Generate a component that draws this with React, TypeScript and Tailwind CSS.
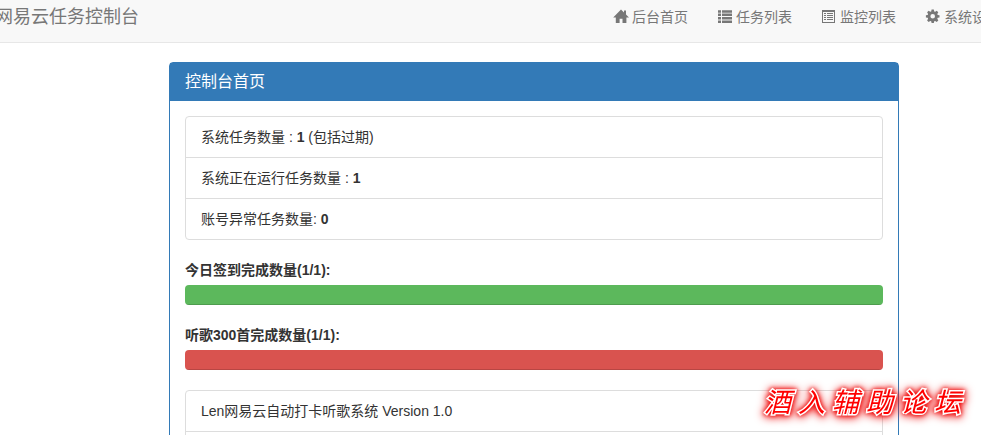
import type { ReactNode } from "react";

function HomeIcon() {
  return (
    <svg viewBox="0 0 14 14" className="size-3.5 shrink-0 overflow-visible" fill="currentColor" aria-hidden="true">
      <path d="M7 -0.6 L10 2.4 V0.6 H12 V4.4 L15 7.4 H12.4 V13 H8.5 V8.8 H5.6 V13 H1.8 V7.4 H-0.8 Z" />
    </svg>
  );
}

function ListIcon() {
  return (
    <svg viewBox="0 0 14 14" className="size-3.5 shrink-0" fill="currentColor" aria-hidden="true">
      <path d="M0 0.2h3v2.5H0zM4 0.2h10.5v2.5H4zM0 3.6h3v2.5H0zM4 3.6h10.5v2.5H4zM0 7h3v2.5H0zM4 7h10.5v2.5H4zM0 10.4h3v2.5H0zM4 10.4h10.5v2.5H4z" />
    </svg>
  );
}

function ListAltIcon() {
  return (
    <svg viewBox="0 0 14 14" className="size-3.5 shrink-0" fill="currentColor" shapeRendering="crispEdges" aria-hidden="true">
      <path fillRule="evenodd" d="M0 0h13v13H0zM1 2v10h11V2z" />
      <path d="M2 3h2v1H2zM5 3h6v1H5zM2 5h2v1H2zM5 5h6v1H5zM2 7h2v1H2zM5 7h6v1H5zM2 9h2v1H2zM5 9h6v1H5z" />
    </svg>
  );
}

function CogIcon() {
  return (
    <svg viewBox="0 0 14 14" className="size-3.5 shrink-0 overflow-visible" fill="currentColor" aria-hidden="true">
      <path
        fillRule="evenodd"
        d="M5.6 -0.4h2.2l0.4 1.8 1 0.4 1.5-1 1.6 1.5-1 1.6 0.4 1 1.8 0.4v2.1l-1.8 0.4-0.4 1 1 1.6-1.6 1.5-1.5-1-1 0.4-0.4 1.8H5.6l-0.4-1.8-1-0.4-1.5 1-1.6-1.5 1-1.6-0.4-1-1.8-0.4V5.3l1.8-0.4 0.4-1-1-1.6L2.7 0.8l1.5 1 1-0.4zM6.7 4a2.3 2.3 0 1 0 0 4.6a2.3 2.3 0 1 0 0-4.6z"
      />
    </svg>
  );
}

const links = [
  { label: "后台首页", icon: <HomeIcon /> },
  { label: "任务列表", icon: <ListIcon /> },
  { label: "监控列表", icon: <ListAltIcon /> },
  { label: "系统设置", icon: <CogIcon /> },
];

const stats = [
  { label: "系统任务数量 :", value: 1, note: "(包括过期)" },
  { label: "系统正在运行任务数量 :", value: 1 },
  { label: "账号异常任务数量:", value: 0 },
];

function ListGroup({ children }: { children: ReactNode }) {
  return (
    <ul className="mb-5 divide-y divide-[#ddd] rounded border border-[#ddd] bg-white">
      {children}
    </ul>
  );
}

function Progress({ id, label, done, total, bar }: { id: string; label: string; done: number; total: number; bar: string }) {
  return (
    <div className="mb-5">
      <p id={id} className="mb-[5px] font-bold">
        {label}({done}/{total}):
      </p>
      <div
        role="progressbar"
        aria-labelledby={id}
        aria-valuenow={done}
        aria-valuemin={0}
        aria-valuemax={total}
        className="h-5 overflow-hidden rounded bg-[#f5f5f5]"
      >
        <div
          className={`h-full shadow-[inset_0_-1px_0_rgba(0,0,0,0.15)] ${bar}`}
          style={{ width: `${(done / total) * 100}%` }}
        />
      </div>
    </div>
  );
}

export default function App() {
  return (
    <div className="relative h-screen overflow-hidden bg-white font-['Liberation_Sans','Noto_Sans_CJK_SC',sans-serif] text-sm leading-5 text-[#333]">
      <nav className="overflow-hidden border-b border-[#e7e7e7] bg-[#f8f8f8] text-[#777]">
        <div className="-mr-[19px] -ml-[5px] flex justify-between pt-[7px] pb-[15px] whitespace-nowrap">
          <a href="#" className="text-lg leading-5">
            网易云任务控制台
          </a>
          <ul className="flex gap-[30px]">
            {links.map((link) => (
              <li key={link.label}>
                <a href="#" className="flex items-center gap-1">
                  {link.icon}
                  {link.label}
                </a>
              </li>
            ))}
          </ul>
        </div>
      </nav>

      <main className="pt-[19px] pr-[82px] pl-[169px]">
        <section className="rounded border border-[#337ab7]">
          <h1 className="bg-[#337ab7] px-[15px] py-[9px] text-base leading-5 text-white">控制台首页</h1>
          <div className="p-[15px]">
            <ListGroup>
              {stats.map((stat) => (
                <li key={stat.label} className="px-[15px] py-2.5">
                  {stat.label} <b>{stat.value}</b> {stat.note}
                </li>
              ))}
            </ListGroup>

            <Progress id="sign-in" label="今日签到完成数量" done={1} total={1} bar="bg-[#5cb85c]" />
            <Progress id="listen" label="听歌300首完成数量" done={1} total={1} bar="bg-[#d9534f]" />

            <ListGroup>
              <li className="px-[15px] py-2.5">Len网易云自动打卡听歌系统 Version 1.0</li>
              <li className="h-10" />
            </ListGroup>
          </div>
        </section>
      </main>

      <div className="absolute right-5 bottom-3 flex gap-[7px] text-[27px] leading-10 text-[#f00] italic [-webkit-text-stroke:3px_#fff] [paint-order:stroke_fill] [filter:drop-shadow(0_0_2px_#e00)_drop-shadow(0_1px_4px_#e00)]">
        {[..."酒入辅助论坛"].map((char) => (
          <span key={char}>{char}</span>
        ))}
      </div>
    </div>
  );
}
